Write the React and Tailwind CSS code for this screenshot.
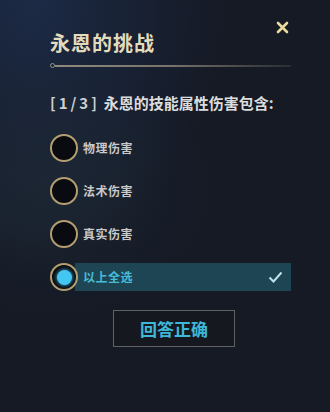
export default function App() {
  const options = [
    { label: "物理伤害" },
    { label: "法术伤害" },
    { label: "真实伤害" },
  ];

  return (
    <div
      className="relative w-[330px] h-[412px] overflow-hidden bg-[#151a25]"
      style={{ fontFamily: '"Noto Sans CJK SC", "Noto Sans", sans-serif' }}
    >
      {/* background wisps */}
      <div className="absolute inset-0 bg-[radial-gradient(ellipse_at_10%_0%,#1c2a45_0%,transparent_45%)]"></div>
      <div className="absolute inset-0 bg-[radial-gradient(ellipse_at_15%_45%,#1e2a36_0%,transparent_40%)] opacity-70"></div>

      <div className="relative pt-[21px] pl-[50px] pr-[39px]">
        {/* header */}
        <div className="flex justify-between items-start">
          <div className="mt-[10px] text-[20px] leading-[24px] font-bold text-[#e3dcbc] tracking-[1px]">
            永恩的挑战
          </div>
          <svg width="13" height="13" viewBox="0 0 13 13" className="mr-[2px]">
            <path d="M2 2 L11 11 M11 2 L2 11" stroke="#eadb9c" strokeWidth="2.6" strokeLinecap="round" />
          </svg>
        </div>

        {/* divider */}
        <div className="mt-[8px] flex items-center">
          <div className="w-[5px] h-[5px] rounded-full border border-[#9a9482]"></div>
          <div className="flex-1 h-[2px] bg-gradient-to-r from-[#8e8a7c] via-[#77736a] to-[#2a2d33]"></div>
        </div>

        {/* question */}
        <div className="mt-[26px] text-[15px] leading-[18px] font-bold text-[#dcdcdc] flex">
          <span className="tracking-[3px] text-[#cfd0d4]">[1/3]</span>
          <span className="ml-[4px]">永恩的技能属性伤害包含:</span>
        </div>

        {/* options */}
        <div className="mt-[22px] flex flex-col gap-[15px]">
          {options.map((o) => (
            <div key={o.label} className="flex items-center h-[28px]">
              <div className="w-[28px] h-[28px] rounded-full border-2 border-[#b49e70] bg-[#090b10]"></div>
              <span className="ml-[5px] text-[12px] font-bold text-[#c9c9c9] tracking-[0.5px]">{o.label}</span>
            </div>
          ))}

          <div className="flex items-center h-[28px]">
            <div className="relative z-10 w-[28px] h-[28px] rounded-full border-2 border-[#b49e70] bg-[#090b10] flex items-center justify-center">
              <div className="w-[15px] h-[15px] rounded-full bg-[#44c6f2] shadow-[0_0_4px_#44c6f2]"></div>
            </div>
            <div className="-ml-[3px] flex-1 h-[28px] bg-[#1d4553] flex items-center justify-between pl-[8px] pr-[8px]">
              <span className="text-[12px] font-bold text-[#49bcd8] tracking-[0.5px]">以上全选</span>
              <svg width="15" height="12" viewBox="0 0 15 12">
                <path d="M1.5 6.5 L5.5 10.5 L13.5 1.5" fill="none" stroke="#bfe2ec" strokeWidth="2" />
              </svg>
            </div>
          </div>
        </div>

        {/* button */}
        <div className="mt-[19px] ml-[63px] w-[122px] h-[37px] border border-[#5f6165] bg-[#15191f] flex items-center justify-center">
          <span className="text-[17px] font-bold text-[#3fb7da]">回答正确</span>
        </div>
      </div>
    </div>
  );
}
